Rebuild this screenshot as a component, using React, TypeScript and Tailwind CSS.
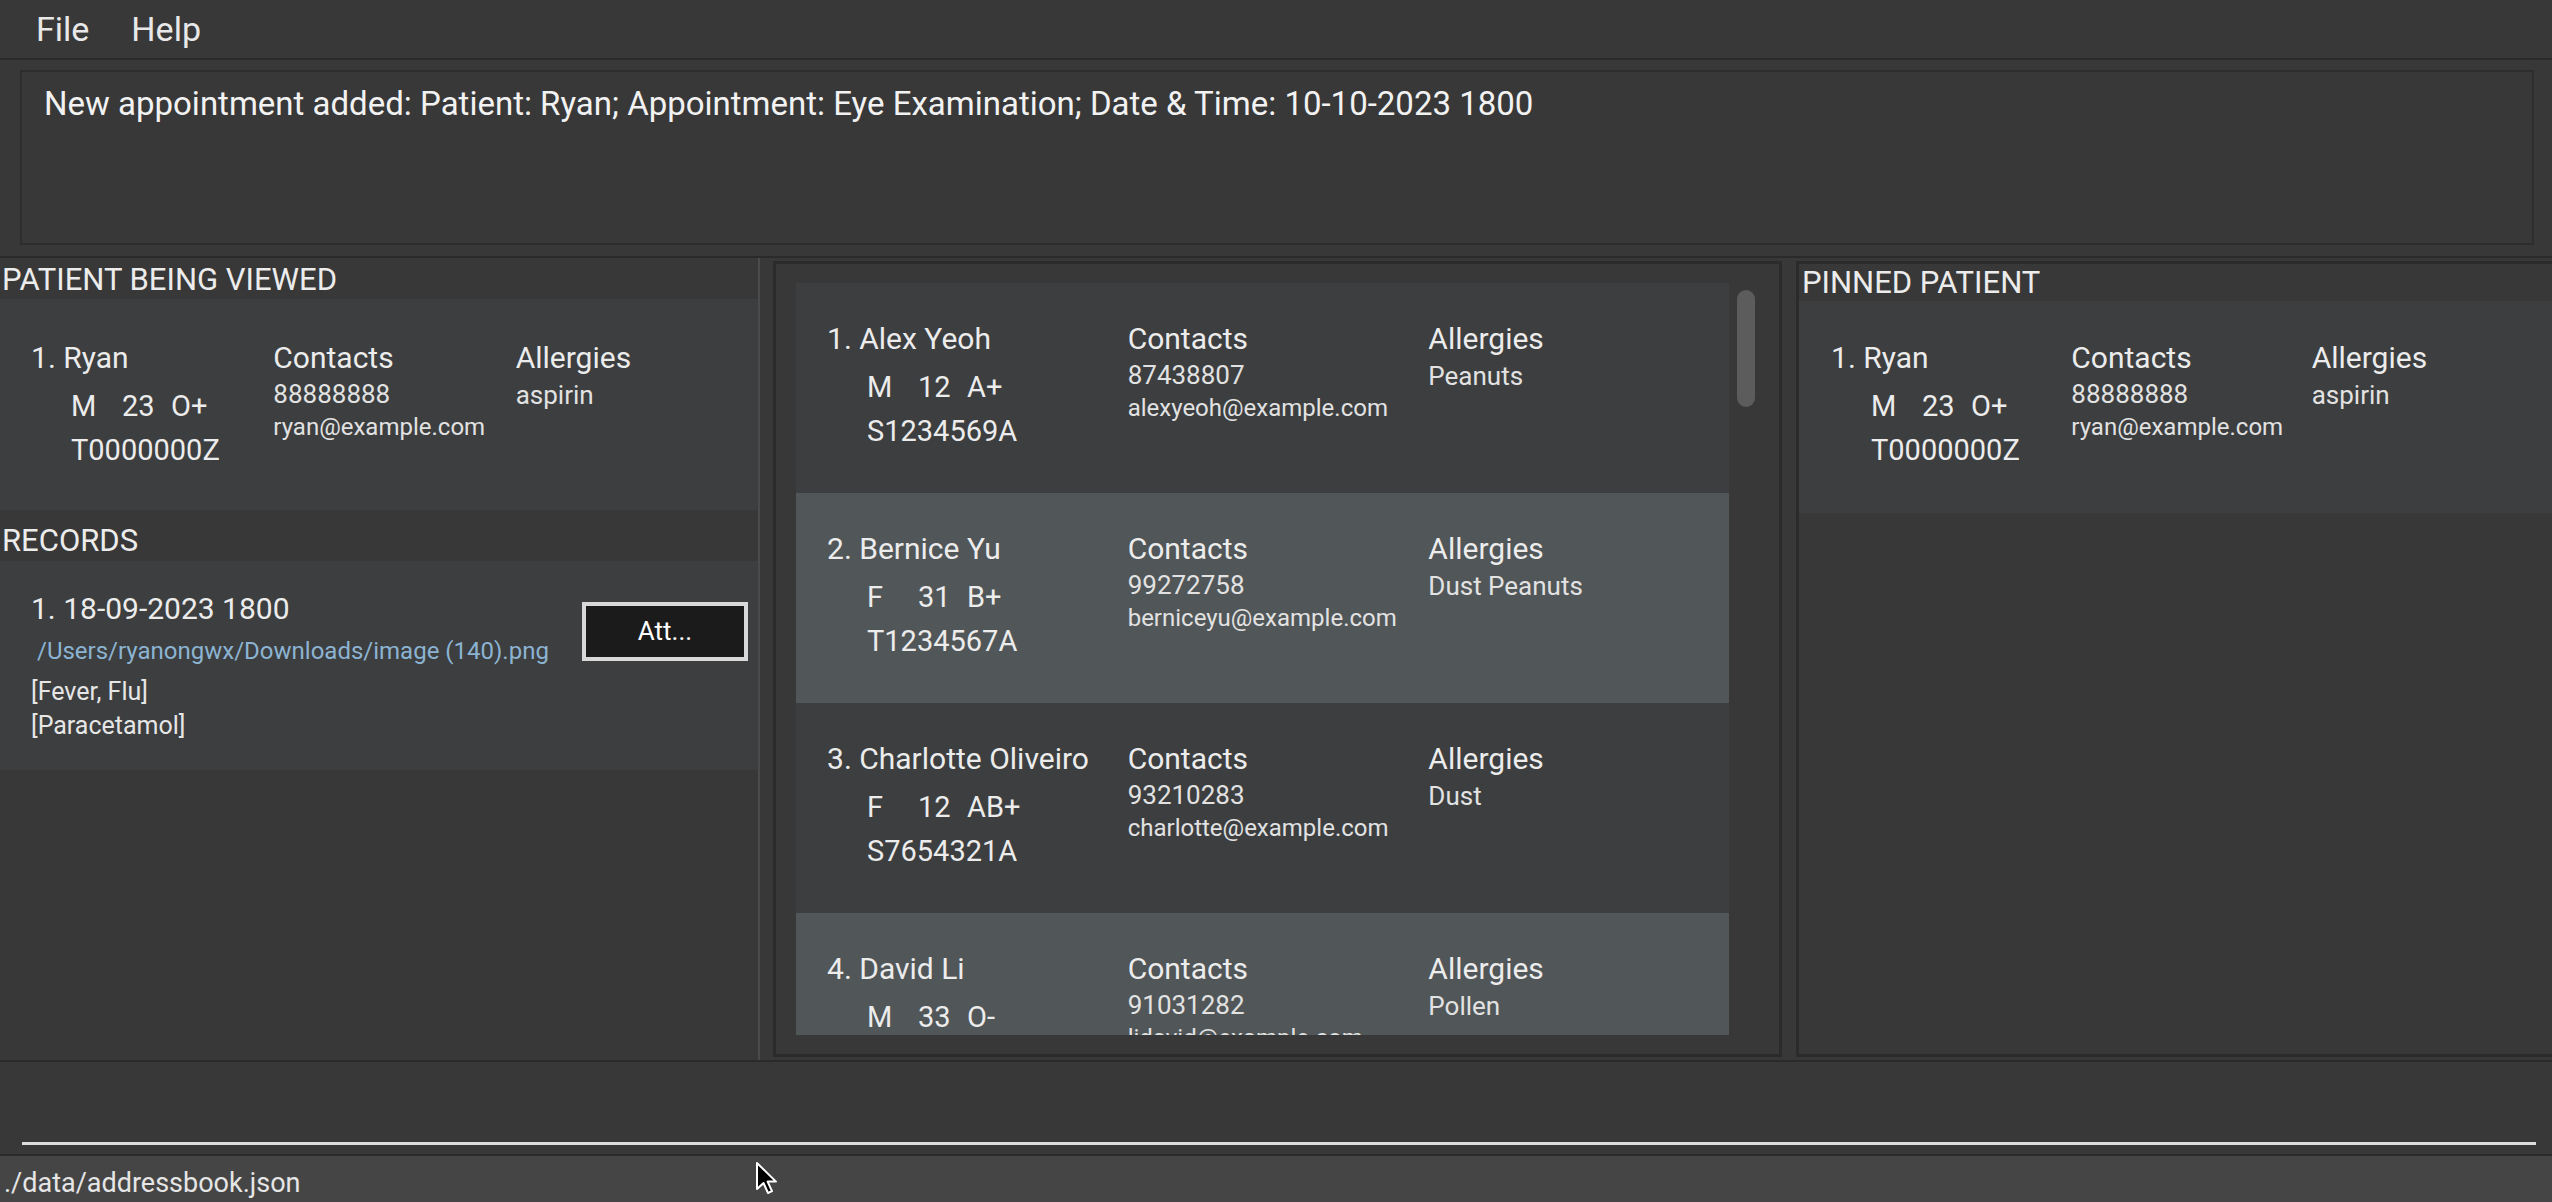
import { type FC } from 'react';

type Patient = {
  idx: number;
  name: string;
  sex: string;
  age: string;
  blood: string;
  ic: string;
  phone: string;
  email: string;
  allergies: string;
};

const patients: Patient[] = [
  { idx: 1, name: 'Alex Yeoh', sex: 'M', age: '12', blood: 'A+', ic: 'S1234569A', phone: '87438807', email: 'alexyeoh@example.com', allergies: 'Peanuts' },
  { idx: 2, name: 'Bernice Yu', sex: 'F', age: '31', blood: 'B+', ic: 'T1234567A', phone: '99272758', email: 'berniceyu@example.com', allergies: 'Dust Peanuts' },
  { idx: 3, name: 'Charlotte Oliveiro', sex: 'F', age: '12', blood: 'AB+', ic: 'S7654321A', phone: '93210283', email: 'charlotte@example.com', allergies: 'Dust' },
  { idx: 4, name: 'David Li', sex: 'M', age: '33', blood: 'O-', ic: 'S8765432A', phone: '91031282', email: 'lidavid@example.com', allergies: 'Pollen' },
];

const ryan: Patient = {
  idx: 1, name: 'Ryan', sex: 'M', age: '23', blood: 'O+', ic: 'T0000000Z',
  phone: '88888888', email: 'ryan@example.com', allergies: 'aspirin',
};

// one patient row, same look in all three panels
const PatientCard: FC<{ p: Patient; odd?: boolean; h: string; pl: string; pt?: string }> = ({ p, odd, h, pl, pt = 'pt-[36px]' }) => (
  <div className={`grid grid-cols-3 shrink-0 ${h} ${pl} ${odd ? 'bg-[#515658]' : 'bg-[#3c3e3f]'}`}>
    <div className={`${pt} whitespace-nowrap`}>
      <div className="text-[30px] leading-[40px] text-[#ececec]">{p.idx}. {p.name}</div>
      <div className="flex pl-[40px] mt-[8px] text-[29px] leading-[40px] text-[#ececec]">
        <span className="w-[51px]">{p.sex}</span>
        <span className="w-[49px]">{p.age}</span>
        <span>{p.blood}</span>
      </div>
      <div className="pl-[40px] mt-[4px] text-[29px] leading-[40px] text-[#ececec]">{p.ic}</div>
    </div>
    <div className={`${pt} whitespace-nowrap`}>
      <div className="text-[30px] leading-[40px] text-[#ececec]">Contacts</div>
      <div className="text-[26px] leading-[32px] text-[#e2e2e2]">{p.phone}</div>
      <div className="text-[24px] leading-[35px] text-[#e2e2e2]">{p.email}</div>
    </div>
    <div className={`${pt} whitespace-nowrap`}>
      <div className="text-[30px] leading-[40px] text-[#ececec]">Allergies</div>
      <div className="text-[26px] leading-[34px] text-[#e2e2e2]">{p.allergies}</div>
    </div>
  </div>
);

export default function App() {
  return (
    <div
      className="relative w-[2552px] h-[1202px] overflow-hidden flex flex-col bg-[#383838] text-white select-none"
      style={{ fontFamily: 'Roboto, "Liberation Sans", sans-serif' }}
    >
      {/* Menu bar */}
      <div className="h-[60px] shrink-0 border-b-2 border-[#2a2a2a] flex items-center pl-[36px] gap-[42px] text-[34px] text-[#e8e8e8]">
        <span>File</span>
        <span>Help</span>
      </div>

      {/* Result display */}
      <div className="h-[198px] shrink-0 border-b-2 border-[#2a2a2a] pt-[10px] pl-[20px] pr-[18px]">
        <div className="h-[175px] border-2 border-[#2d2d2d] pl-[22px] pt-[12px]">
          <p className="text-[33px] leading-[40px] text-[#f2f2f2] whitespace-nowrap">
            New appointment added: Patient: Ryan; Appointment: Eye Examination; Date &amp; Time: 10-10-2023 1800
          </p>
        </div>
      </div>

      {/* Main area */}
      <div className="h-[802px] shrink-0 flex">
        {/* Left: patient being viewed + records */}
        <div className="w-[760px] shrink-0 border-r-2 border-[#4b4b4b] flex flex-col">
          <div className="h-[41px] leading-[43px] pl-[2px] text-[31px] text-[#ececec]">PATIENT BEING VIEWED</div>
          <PatientCard p={ryan} h="h-[211px]" pl="pl-[31px]" pt="pt-[39px]" />
          <div className="h-[51px] pt-[10px] leading-[41px] pl-[2px] text-[31px] text-[#ececec]">RECORDS</div>
          <div className="h-[209px] bg-[#3c3e3f] flex">
            <div className="flex-1 pl-[31px] pt-[28px] whitespace-nowrap">
              <div className="text-[30px] leading-[40px] text-[#ececec]">1. 18-09-2023 1800</div>
              <div className="mt-[7px] pl-[6px] text-[24px] leading-[30px] text-[#8cb4d2]">
                /Users/ryanongwx/Downloads/image (140).png
              </div>
              <div className="mt-[9px] text-[25px] leading-[34px] text-[#e6e6e6]">[Fever, Flu]</div>
              <div className="text-[25px] leading-[34px] text-[#e6e6e6]">[Paracetamol]</div>
            </div>
            <button className="shrink-0 mt-[41px] mr-[10px] w-[166px] h-[59px] border-[4px] border-[#d8d8d8] bg-[#1b1b1b] text-[26px] text-white flex items-center justify-center">
              Att...
            </button>
          </div>
        </div>

        <div className="w-[13px] shrink-0" />

        {/* Middle: patient list */}
        <div className="w-[1009px] shrink-0 mt-[3px] h-[796px] border-[3px] border-[#2b2b2b] pt-[19px] pl-[20px] flex">
          <div className="w-[933px] h-[752px] overflow-hidden flex flex-col">
            {patients.map((p, i) => (
              <PatientCard key={p.idx} p={p} odd={i % 2 === 1} h="h-[210px]" pl="pl-[31px]" />
            ))}
          </div>
          <div className="ml-[8px] mt-[7px] w-[18px] h-[117px] rounded-full bg-[#5c5c5c]" />
        </div>

        <div className="w-[14px] shrink-0" />

        {/* Right: pinned patient */}
        <div className="flex-1 mt-[3px] h-[796px] border-[3px] border-r-0 border-[#2b2b2b] flex flex-col">
          <div className="h-[37px] leading-[38px] pl-[3px] text-[31px] text-[#ececec]">PINNED PATIENT</div>
          <PatientCard p={ryan} h="h-[212px]" pl="pl-[32px]" pt="pt-[37px]" />
        </div>
      </div>

      <div className="h-[2px] shrink-0 bg-[#2a2a2a]" />

      {/* Command box */}
      <div className="h-[92px] shrink-0 flex items-end pl-[22px] pr-[16px] pb-[9px]">
        <div className="w-full h-[40px] border-b-[3px] border-[#dcdcdc]" />
      </div>

      <div className="h-[2px] shrink-0 bg-[#2a2a2a]" />

      {/* Status bar */}
      <div className="h-[46px] shrink-0 bg-[#454545] pl-[4px] pt-[6px] text-[27px] leading-[42px] text-[#e6e6e6]">
        ./data/addressbook.json
      </div>

      {/* mouse pointer */}
      <svg className="absolute left-[755px] top-[1161px]" width="24" height="36" viewBox="0 0 24 36">
        <path d="M2 2 L2 28 L8.5 22 L13 32 L17 30.2 L12.6 20.6 L21 20.6 Z" fill="#000" stroke="#fff" strokeWidth="2" strokeLinejoin="round" />
      </svg>
    </div>
  );
}
